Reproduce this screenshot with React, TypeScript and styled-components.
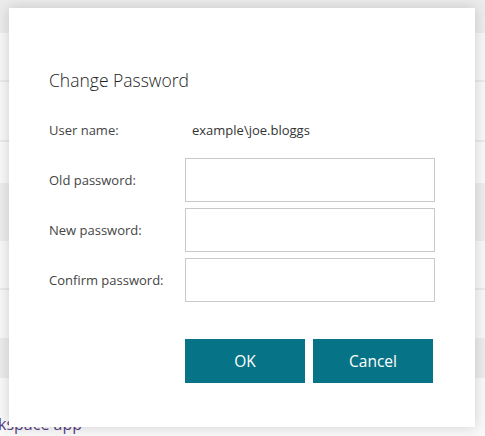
import React from "react";
import styled, { createGlobalStyle } from "styled-components";

const Global = createGlobalStyle`
  html, body { margin: 0; padding: 0; }
  body {
    width: 485px;
    height: 436px;
    overflow: hidden;
    background: #f8f8f8;
    font-family: "Open Sans", "Noto Sans", sans-serif;
  }
`;

const Page = styled.div`
  position: relative;
  width: 485px;
  height: 436px;
  overflow: hidden;
  display: flex;
  flex-direction: column;
`;

const Band = styled.div<{ $h: number; $bg: string; $line?: boolean }>`
  height: ${(p) => p.$h}px;
  background: ${(p) => p.$bg};
  border-bottom: ${(p) => (p.$line ? "2px solid #e9e9e9" : "none")};
  flex: none;
`;

const FooterText = styled.div`
  flex: 1;
  background: #f8f8f8;
  color: #5a3f85;
  font-size: 16px;
  line-height: 20px;
  padding-top: 36px;
  margin-left: -2px;
`;

const Overlay = styled.div`
  position: absolute;
  left: 9px;
  top: 8px;
  width: 466px;
  height: 419px;
  background: #ffffff;
  box-shadow: 0 0 12px rgba(0, 0, 0, 0.16);
  box-sizing: border-box;
  padding: 60px 40px 0 40px;
  display: flex;
  flex-direction: column;
`;

const Title = styled.h2`
  margin: 0 0 16px 0;
  font-size: 17.5px;
  line-height: 24px;
  font-weight: 300;
  color: #222;
`;

const Form = styled.div`
  display: grid;
  grid-template-columns: 136px 250px;
  grid-auto-rows: 44px;
  row-gap: 6px;
  align-items: center;
`;

const Label = styled.label`
  font-size: 13px;
  color: #444;
  line-height: 18px;
`;

const Value = styled.div`
  font-size: 13px;
  color: #333;
  padding-left: 7px;
`;

const Input = styled.input`
  box-sizing: border-box;
  width: 250px;
  height: 44px;
  border: 1px solid #c9c9c9;
  background: #fff;
  margin: 0;
  padding: 0 8px;
  font-family: inherit;
  font-size: 13px;
  outline: none;
`;

const Actions = styled.div`
  display: flex;
  justify-content: flex-end;
  gap: 8px;
  margin-top: 37px;
  margin-right: 2px;
`;

const Button = styled.button`
  width: 120px;
  height: 44px;
  border: none;
  background: #077387;
  color: #fff;
  font-family: inherit;
  font-size: 15.5px;
  cursor: pointer;
  padding: 0;
`;

export default function App() {
  return (
    <>
      <Global />
      <Page>
        <Band $h={33} $bg="#ebebeb" />
        <Band $h={47} $bg="#f6f6f6" $line />
        <Band $h={58} $bg="#f7f7f7" $line />
        <Band $h={41} $bg="#f8f8f8" />
        <Band $h={58} $bg="#ececec" />
        <Band $h={47} $bg="#f7f7f7" $line />
        <Band $h={48} $bg="#f7f7f7" />
        <Band $h={40} $bg="#ebebeb" />
        <FooterText>kspace app</FooterText>
        <Overlay>
          <Title>Change Password</Title>
          <Form>
            <Label>User name:</Label>
            <Value>example\joe.bloggs</Value>
            <Label htmlFor="old">Old password:</Label>
            <Input id="old" type="password" />
            <Label htmlFor="new">New password:</Label>
            <Input id="new" type="password" />
            <Label htmlFor="confirm">Confirm password:</Label>
            <Input id="confirm" type="password" />
          </Form>
          <Actions>
            <Button>OK</Button>
            <Button>Cancel</Button>
          </Actions>
        </Overlay>
      </Page>
    </>
  );
}
